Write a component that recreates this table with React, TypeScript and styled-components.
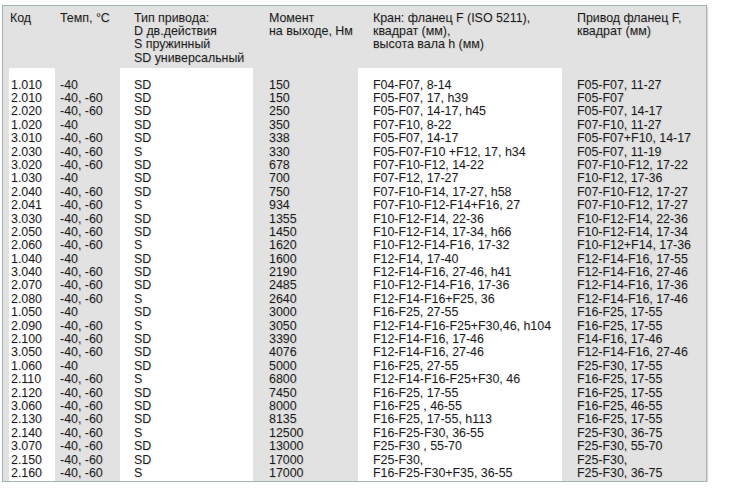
import React from "react";
import styled, { createGlobalStyle } from "styled-components";

const Global = createGlobalStyle`
  html, body { margin: 0; padding: 0; background: #ffffff; }
  body { font-family: "Liberation Sans", Arial, sans-serif; }
`;

type Row = [string, string, string, string, string, string];

const rows: Row[] = [
  ["1.010", "-40", "SD", "150", "F04-F07, 8-14", "F05-F07, 11-27"],
  ["2.010", "-40, -60", "SD", "150", "F05-F07, 17, h39", "F05-F07"],
  ["2.020", "-40, -60", "SD", "250", "F05-F07, 14-17, h45", "F05-F07, 14-17"],
  ["1.020", "-40", "SD", "350", "F07-F10, 8-22", "F07-F10, 11-27"],
  ["3.010", "-40, -60", "SD", "338", "F05-F07, 14-17", "F05-F07+F10, 14-17"],
  ["2.030", "-40, -60", "S", "330", "F05-F07-F10 +F12, 17, h34", "F05-F07, 11-19"],
  ["3.020", "-40, -60", "SD", "678", "F07-F10-F12, 14-22", "F07-F10-F12, 17-22"],
  ["1.030", "-40", "SD", "700", "F07-F12, 17-27", "F10-F12, 17-36"],
  ["2.040", "-40, -60", "SD", "750", "F07-F10-F14, 17-27, h58", "F07-F10-F12, 17-27"],
  ["2.041", "-40, -60", "S", "934", "F07-F10-F12-F14+F16, 27", "F07-F10-F12, 17-27"],
  ["3.030", "-40, -60", "SD", "1355", "F10-F12-F14, 22-36", "F10-F12-F14, 22-36"],
  ["2.050", "-40, -60", "SD", "1450", "F10-F12-F14, 17-34, h66", "F10-F12-F14, 17-34"],
  ["2.060", "-40, -60", "S", "1620", "F10-F12-F14-F16, 17-32", "F10-F12+F14, 17-36"],
  ["1.040", "-40", "SD", "1600", "F12-F14, 17-40", "F12-F14-F16, 17-55"],
  ["3.040", "-40, -60", "SD", "2190", "F12-F14-F16, 27-46, h41", "F12-F14-F16, 27-46"],
  ["2.070", "-40, -60", "SD", "2485", "F10-F12-F14-F16, 17-36", "F12-F14-F16, 17-36"],
  ["2.080", "-40, -60", "S", "2640", "F12-F14-F16+F25, 36", "F12-F14-F16, 17-46"],
  ["1.050", "-40", "SD", "3000", "F16-F25, 27-55", "F16-F25, 17-55"],
  ["2.090", "-40, -60", "S", "3050", "F12-F14-F16-F25+F30,46, h104", "F16-F25, 17-55"],
  ["2.100", "-40, -60", "SD", "3390", "F12-F14-F16, 17-46", "F14-F16, 17-46"],
  ["3.050", "-40, -60", "SD", "4076", "F12-F14-F16, 27-46", "F12-F14-F16, 27-46"],
  ["1.060", "-40", "SD", "5000", "F16-F25, 27-55", "F25-F30, 17-55"],
  ["2.110", "-40, -60", "S", "6800", "F12-F14-F16-F25+F30, 46", "F16-F25, 17-55"],
  ["2.120", "-40, -60", "SD", "7450", "F16-F25, 17-55", "F16-F25, 17-55"],
  ["3.060", "-40, -60", "SD", "8000", "F16-F25 , 46-55", "F16-F25, 46-55"],
  ["2.130", "-40, -60", "SD", "8135", "F16-F25, 17-55, h113", "F16-F25, 17-55"],
  ["2.140", "-40, -60", "S", "12500", "F16-F25-F30, 36-55", "F25-F30, 36-75"],
  ["3.070", "-40, -60", "SD", "13000", "F25-F30 , 55-70", "F25-F30, 55-70"],
  ["2.150", "-40, -60", "SD", "17000", "F25-F30,", "F25-F30,"],
  ["2.160", "-40, -60", "S", "17000", "F16-F25-F30+F35, 36-55", "F25-F30, 36-75"],
];

const headers: string[][] = [
  ["Код"],
  ["Темп, °C"],
  ["Тип привода:", "D дв.действия", "S пружинный", "SD универсальный"],
  ["Момент", "на выходе, Нм"],
  ["Кран: фланец F (ISO 5211),", "квадрат (мм),", "высота вала h (мм)"],
  ["Привод фланец F,", "квадрат (мм)"],
];

const pads = [2, 5, 14, 16, 15, 15];
const whiteCols = [true, false, true, false, true, false];

const Table = styled.div`
  margin: 5px 0 0 2px;
  width: 705px;
  height: 477px;
  box-sizing: border-box;
  border: 1px solid #a3b2b6;
  background: #e2e2e2;
  box-shadow: 1px 1px 2px rgba(120, 130, 130, 0.35);
  padding-left: 6px;
  display: grid;
  grid-template-columns: 46px 65px 133px 105px 204px 1fr;
  grid-template-rows: 62px 1fr;
  color: #1a1a1a;
  font-family: "Liberation Sans", Arial, sans-serif;
  font-size: 12.4px;
  line-height: 13.4px;
  text-shadow: 1px 1px 1px rgba(0, 0, 0, 0.1);
`;

const HeaderCell = styled.div<{ $pad: number }>`
  padding: 5.6px 0 0 ${(p) => p.$pad}px;
  white-space: nowrap;
`;

const BodyCell = styled.div<{ $pad: number; $white: boolean }>`
  padding: 10.6px 0 0 ${(p) => p.$pad}px;
  background: ${(p) => (p.$white ? "#ffffff" : "transparent")};
  white-space: nowrap;
`;

const Line = styled.div`
  height: 13.4px;
`;

export default function App() {
  return (
    <>
      <Global />
      <Table>
        {headers.map((lines, i) => (
          <HeaderCell key={`h${i}`} $pad={pads[i] - (i === 0 ? 1 : 0)}>
            {lines.map((l, j) => (
              <Line key={j}>{l}</Line>
            ))}
          </HeaderCell>
        ))}
        {pads.map((pad, c) => (
          <BodyCell key={`b${c}`} $pad={pad} $white={whiteCols[c]}>
            {rows.map((r, j) => (
              <Line key={j}>{r[c]}</Line>
            ))}
          </BodyCell>
        ))}
      </Table>
    </>
  );
}
